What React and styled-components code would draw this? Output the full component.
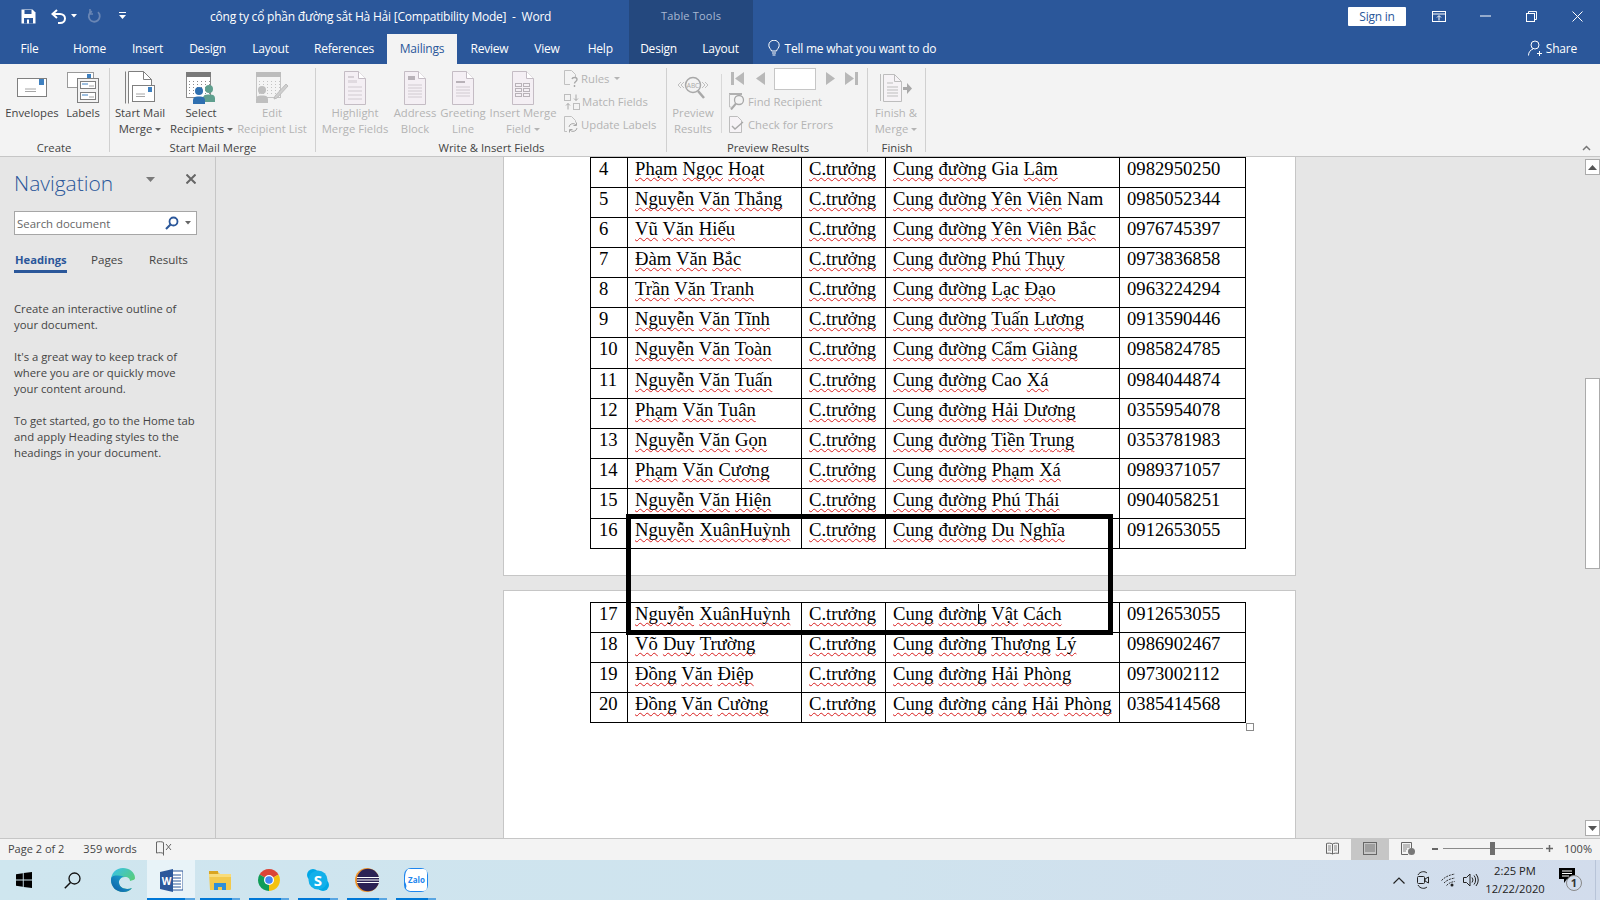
import React from 'react'
import styled, { createGlobalStyle } from 'styled-components'

const BLUE = '#2b579a'
const DIS = '#b4b4b4'

const Global = createGlobalStyle`
  html, body { margin: 0; padding: 0; overflow: hidden; background: #e6e6e6; }
  body { font-family: "Open Sans", "Liberation Sans", sans-serif; }
  svg { display: block; flex: none; }
`

const Shell = styled.div`
  width: 1600px;
  height: 900px;
  display: flex;
  flex-direction: column;
  overflow: hidden;
`
const Gap = styled.span`
  flex: none;
  width: ${p => p.$w}px;
`

/* ---------- title bar + tabs ---------- */
const Header = styled.header`
  height: 64px;
  background: ${BLUE};
  color: #fff;
  font-size: 12px;
  letter-spacing: -0.22px;
`
const TitleRow = styled.div`
  height: 32px;
  display: grid;
  grid-template-columns: 210px 419px 124px 1fr auto;
  align-items: center;
`
const Qat = styled.div`
  display: flex;
  align-items: center;
  padding-left: 21px;
`
const DocTitle = styled.div`
  white-space: pre;
`
const ContextHead = styled.div`
  height: 32px;
  line-height: 32px;
  text-align: center;
  background: #24487e;
  color: #a8b8d2;
  font-size: 11px;
  letter-spacing: 0.2px;
`
const WinControls = styled.div`
  display: flex;
  align-items: center;
`
const SignIn = styled.div`
  width: 58px;
  height: 19px;
  line-height: 19px;
  text-align: center;
  background: #fff;
  color: ${BLUE};
  border-radius: 1px;
  margin-right: 10px;
`
const WinBtn = styled.div`
  width: 46px;
  display: flex;
  justify-content: center;
`
const TabRow = styled.nav`
  height: 32px;
  display: flex;
`
const Tab = styled.div`
  width: ${p => p.$w}px;
  text-align: center;
  align-self: flex-end;
  height: ${p => (p.$active ? 30 : 32)}px;
  line-height: ${p => (p.$active ? 30 : 34)}px;
  background: ${p => (p.$active ? '#f3f3f3' : p.$context ? '#24487e' : 'transparent')};
  color: ${p => (p.$active ? BLUE : '#fff')};
`
const TellMe = styled.div`
  display: flex;
  align-items: center;
  gap: 5px;
  padding-left: 15px;
`
const Share = styled.div`
  margin-left: auto;
  display: flex;
  align-items: center;
  gap: 4px;
  padding-right: 23px;
`

/* ---------- ribbon ---------- */
const Ribbon = styled.section`
  height: 93px;
  box-sizing: border-box;
  background: #f3f3f3;
  border-bottom: 1px solid #c6c6c6;
  display: flex;
  font-size: 11.3px;
  color: #444;
`
const Group = styled.div`
  width: ${p => p.$w}px;
  box-sizing: border-box;
  display: flex;
  flex-direction: column;
  position: relative;
  padding-left: ${p => p.$pad || 0}px;
  &::after {
    content: '';
    position: absolute;
    right: 0;
    top: 4px;
    bottom: 4px;
    width: 1px;
    background: #d0d0d0;
  }
`
const GroupBody = styled.div`
  height: 76px;
  display: flex;
`
const GroupLabel = styled.div`
  height: 16px;
  line-height: 16px;
  text-align: center;
  color: #444;
  margin-left: ${p => (p.$off ? -p.$off : 0)}px;
`
const LargeBtn = styled.div`
  width: ${p => p.$w}px;
  flex: none;
  text-align: center;
  color: ${p => (p.$off ? DIS : '#444')};
  line-height: 16px;
  white-space: nowrap;
`
const LargeIcon = styled.div`
  height: 35px;
  padding-top: 6px;
  display: flex;
  justify-content: center;
  align-items: center;
`
const Caret = styled.span`
  display: inline-block;
  margin-left: 3px;
  vertical-align: 2px;
  border: 3px solid transparent;
  border-top: 3px solid ${p => (p.$off ? DIS : '#666')};
  border-bottom: 0;
`
const SmallCol = styled.div`
  padding: 3px 0 0 ${p => p.$pad || 4}px;
  color: ${DIS};
`
const SmallBtn = styled.div`
  height: 23px;
  display: flex;
  align-items: center;
  gap: 2px;
  white-space: nowrap;
`
const VSep = styled.div`
  width: 1px;
  height: 59px;
  margin: 10px 1px 0 3px;
  background: #d8d8d8;
`
const RecordNav = styled.div`
  display: flex;
  align-items: center;
  height: 23px;
  margin-left: 2px;
`
const RecordInput = styled.div`
  width: 40px;
  height: 20px;
  background: #fff;
  border: 1px solid #c6c6c6;
  margin: 0 10px 0 9px;
`
const CollapseBtn = styled.div`
  margin-left: auto;
  align-self: flex-end;
  padding: 0 9px 5px 0;
`

/* ---------- main area ---------- */
const Main = styled.main`
  height: 681px;
  display: grid;
  grid-template-columns: 216px 1fr 17px;
  background: #e6e6e6;
`
const NavPane = styled.aside`
  box-sizing: border-box;
  border-right: 1px solid #c6c6c6;
  padding: 12px 0 0 14px;
  color: #444;
  font-size: 11.3px;
`
const NavHead = styled.div`
  display: flex;
  align-items: center;
  height: 28px;
`
const NavTitle = styled.div`
  font-size: 21px;
  font-weight: 300;
  color: ${BLUE};
  width: 132px;
`
const NavArrow = styled.div`
  margin-top: -8px;
`
const NavClose = styled.div`
  margin: -8px 0 0 31px;
`
const SearchBox = styled.div`
  width: 183px;
  height: 24px;
  box-sizing: border-box;
  margin-top: 14px;
  background: #fff;
  border: 1px solid #a6a6a6;
  padding: 0 5px 0 2px;
  display: flex;
  align-items: center;
  font-size: 11.4px;
  color: #666;
`
const SearchIcons = styled.div`
  margin-left: auto;
  display: flex;
  align-items: center;
  gap: 6px;
`
const NavTabs = styled.div`
  margin-top: 15px;
  display: flex;
`
const NavTab = styled.div`
  width: ${p => p.$w}px;
  height: 23px;
  box-sizing: border-box;
  line-height: 20px;
  padding-left: ${p => p.$pad}px;
  font-weight: ${p => (p.$active ? 700 : 400)};
  color: ${p => (p.$active ? BLUE : '#444')};
  font-size: ${p => (p.$active ? '11.2px' : '11.6px')};
  border-bottom: 3px solid ${p => (p.$active ? BLUE : 'transparent')};
  margin-right: ${p => p.$gap}px;
`
const HelpText = styled.div`
  margin-top: 28px;
  line-height: 16px;
`
const HelpPara = styled.p`
  margin: 0 0 16px;
  white-space: nowrap;
`
const DocPane = styled.div`
  position: relative;
  overflow: hidden;
  padding-left: 287px;
`
const Page = styled.div`
  width: 793px;
  box-sizing: border-box;
  background: #fff;
  border: 1px solid #c6c6c6;
  padding-left: 86px;
  ${p => (p.$first
    ? 'height: 419px; border-top: 0;'
    : 'height: 300px; margin-top: 14px; padding-top: 11px; position: relative;')}
`
const WordTable = styled.table`
  table-layout: fixed;
  width: 655px;
  border-collapse: collapse;
  font-family: "Liberation Serif", "Times New Roman", serif;
  font-size: 18.67px;
  word-spacing: 0.4px;
  color: #000;
`
const Row = styled.tr`
  height: ${p => p.$h}px;
`
const Cell = styled.td`
  border: 1px solid #000;
  padding: 0 0 0 ${p => p.$pad || 7}px;
  vertical-align: top;
  white-space: nowrap;
  overflow: visible;
`
const Squiggle = styled.span`
  text-decoration: underline wavy #d81f1f 1px;
  text-decoration-skip-ink: none;
  text-underline-offset: 2px;
`
const MergeBox = styled.div`
  position: absolute;
  left: 410px;
  top: 357px;
  width: 487px;
  height: 121px;
  box-sizing: border-box;
  border: 5px solid #000;
  border-top-width: 4px;
`
const TextCaret = styled.div`
  position: absolute;
  left: 474px;
  top: 13px;
  width: 1px;
  height: 20px;
  background: #111;
`
const ResizeHandle = styled.div`
  position: absolute;
  left: 742px;
  top: 132px;
  width: 6px;
  height: 6px;
  background: #fff;
  border: 1px solid #8a8a8a;
`
const ScrollBar = styled.div`
  display: flex;
  flex-direction: column;
  padding: 2px 0 2px 2px;
`
const ScrollBtn = styled.div`
  width: 13px;
  height: 14px;
  background: #fff;
  border: 1px solid #ababab;
  display: flex;
  align-items: center;
  justify-content: center;
  margin-top: ${p => (p.$end ? 'auto' : 0)};
`
const ScrollThumb = styled.div`
  width: 13px;
  height: 189px;
  margin-top: 203px;
  background: #fff;
  border: 1px solid #ababab;
`

/* ---------- status bar ---------- */
const StatusBar = styled.footer`
  height: 22px;
  box-sizing: border-box;
  background: #f3f3f3;
  border-top: 1px solid #c6c6c6;
  display: flex;
  align-items: center;
  font-size: 11px;
  color: #444;
  padding-left: 8px;
`
const StatusText = styled.span`
  margin-right: 19px;
  padding-bottom: 3px;
`
const StatusGlyph = styled.div`
  padding-bottom: 2px;
`
const ViewBtn = styled.div`
  width: ${p => p.$w || 38}px;
  height: 21px;
  padding-bottom: 2px;
  box-sizing: border-box;
  display: flex;
  align-items: center;
  justify-content: center;
  background: ${p => (p.$active ? '#c6c6c6' : 'transparent')};
`
const StatusRight = styled.div`
  margin-left: auto;
  display: flex;
  align-items: center;
`
const ZoomSlider = styled.div`
  width: 100px;
  height: 1px;
  margin: 0 3px 2px 5px;
  background: #8a8a8a;
  position: relative;
`
const ZoomThumb = styled.div`
  position: absolute;
  left: 47px;
  top: -6px;
  width: 5px;
  height: 13px;
  background: #6e6e6e;
`
const ZoomPct = styled.span`
  margin: 0 8px 0 11px;
  padding-bottom: 3px;
`

/* ---------- taskbar ---------- */
const Taskbar = styled.div`
  height: 40px;
  display: flex;
  align-items: center;
  background: linear-gradient(90deg, #cfe6ef 0%, #cfe3ee 55%, #d2dcec 100%);
  color: #111;
`
const StartBtn = styled.div`
  width: 48px;
  height: 40px;
  display: flex;
  align-items: center;
  justify-content: center;
`
const AppBtn = styled.div`
  width: ${p => (p.$active ? 48 : 40)}px;
  margin-left: ${p => (p.$active ? 0 : p.$ml ?? 9)}px;
  height: 40px;
  box-sizing: border-box;
  display: flex;
  align-items: center;
  justify-content: center;
  position: relative;
  background: ${p => (p.$active ? '#e8f3f8' : 'transparent')};
  &::after {
    content: '';
    position: absolute;
    left: 0;
    right: 0;
    bottom: 0;
    height: 2px;
    background: linear-gradient(90deg, #0078d7 80%, #5aa6e2 80%);
  }
`
const PlainBtn = styled(AppBtn)`
  width: 48px;
  &::after { display: none; }
`
const Tray = styled.div`
  margin-left: auto;
  display: flex;
  align-items: center;
  height: 40px;
  font-size: 11.2px;
  color: #222;
`
const TrayIcon = styled.div`
  width: ${p => p.$w}px;
  display: flex;
  justify-content: center;
`
const Clock = styled.div`
  width: 70px;
  text-align: center;
  line-height: 18px;
  white-space: nowrap;
`
const Notify = styled.div`
  width: 36px;
  margin-left: 5px;
  display: flex;
  justify-content: center;
  border-right: 1px solid #b8c4d8;
  height: 40px;
  align-items: center;
  padding-right: 4px;
`

/* ---------- icons ---------- */
const S = ({ w, h, children, vb }) => (
  <svg width={w} height={h} viewBox={vb || `0 0 ${w} ${h}`} fill="none">{children}</svg>
)

const SaveIcon = () => (
  <S w={15} h={15}>
    <path d="M.5.5h11l3 3v11H.5z" fill="#fff" />
    <rect x="3.5" y="1" width="7" height="4" fill={BLUE} />
    <rect x="3" y="9" width="9" height="5.5" fill={BLUE} />
    <rect x="6" y="10.5" width="2" height="4" fill="#fff" />
  </S>
)
const UndoIcon = ({ color = '#fff' }) => (
  <S w={16} h={15}>
    <path d="M6 1 1.5 5 6 9M2 5h7c3 0 5 2 5 4.5S12 14 9 14H7" stroke={color} strokeWidth="2" />
  </S>
)
const RedoIcon = () => (
  <S w={14} h={15}>
    <path d="M11 3.2A5.5 5.5 0 1 1 5 2.2" stroke="#6a86b4" strokeWidth="1.8" />
    <path d="M3 0v5h3" stroke="#6a86b4" strokeWidth="1.6" />
  </S>
)
const TinyCaret = ({ color = '#fff' }) => (
  <S w={6} h={4}><path d="M0 0h6L3 3.5z" fill={color} /></S>
)
const QatMore = () => (
  <S w={7} h={8}><path d="M0 .5h7" stroke="#fff" /><path d="M0 3h7L3.5 7z" fill="#fff" /></S>
)
const RibbonDisplay = () => (
  <S w={14} h={11}>
    <rect x=".5" y=".5" width="13" height="10" stroke="#fff" />
    <path d="M.5 3h13M7 9.5V5M5 6.5l2-2 2 2" stroke="#fff" />
  </S>
)
const MinIcon = () => <S w={11} h={2}><path d="M0 1h11" stroke="#fff" /></S>
const RestoreIcon = () => (
  <S w={11} h={11}>
    <rect x=".5" y="2.5" width="8" height="8" stroke="#fff" />
    <path d="M2.5 2.5v-2h8v8h-2" stroke="#fff" />
  </S>
)
const CloseIcon = ({ size = 11, color = '#fff', sw = 1 }) => (
  <S w={size} h={size}>
    <path d={`M.5.5l${size - 1} ${size - 1}M${size - .5} .5l${-(size - 1)} ${size - 1}`} stroke={color} strokeWidth={sw} />
  </S>
)
const BulbIcon = () => (
  <S w={12} h={16}>
    <path d="M3.5 11C3 9 .8 8 .8 5.2a5.2 5 0 0 1 10.4 0C11.2 8 9 9 8.5 11z" stroke="#fff" />
    <path d="M4 13h4M4.5 15h3" stroke="#fff" />
  </S>
)
const ShareIcon = () => (
  <S w={14} h={16}>
    <circle cx="7" cy="5" r="4" stroke="#fff" />
    <path d="M.5 15.5c0-3.5 2-5.500 4.500-6.500M9 13.500h5M11.500 11v5" stroke="#fff" />
  </S>
)

const EnvelopeIcon = () => (
  <S w={30} h={19}>
    <rect x=".5" y=".5" width="29" height="18" fill="#fff" stroke="#7f7f7f" />
    <rect x="22" y="1" width="5" height="6" fill="#3e80c0" />
    <path d="M8 11h11M8 13.500h11" stroke="#a6a6a6" />
  </S>
)
const LabelsIcon = () => (
  <S w={32} h={31}>
    <rect x=".5" y=".5" width="26" height="15" fill="#fff" stroke="#9a9a9a" />
    <rect x="20" y="2" width="4" height="5" fill="#3e80c0" />
    <rect x="10.500" y="6.500" width="21" height="24" fill="#f3f3f3" stroke="#7f7f7f" />
    <rect x="13.500" y="9.500" width="15" height="7" fill="#fff" stroke="#7f7f7f" />
    <rect x="13.500" y="20.500" width="15" height="7" fill="#fff" stroke="#7f7f7f" />
    <path d="M15 12h6M15 23h6" stroke="#3e80c0" />
    <path d="M22 14h5M22 25h5" stroke="#a6a6a6" />
  </S>
)
const MergeIcon = () => (
  <S w={30} h={34}>
    <path d="M.5.5v32" stroke="#7f7f7f" />
    <path d="M3.500 32.500V.5h15l8 8v6" fill="#fff" stroke="#7f7f7f" />
    <path d="M18.500.5v8h8" stroke="#7f7f7f" />
    <rect x="7.500" y="14.500" width="22" height="16" fill="#fff" stroke="#7f7f7f" />
    <rect x="23" y="16" width="4" height="5" fill="#3e80c0" />
    <path d="M11 23h9M11 25.500h9" stroke="#a6a6a6" />
  </S>
)
const Dots = ({ color }) => (
  <g fill={color}>
    {[9, 12, 15, 18, 21].map(y => [3, 7, 11, 15, 19, 23].map(x => (
      <rect key={`${x}-${y}`} x={x} y={y} width="1" height="1" />
    )))}
  </g>
)
const Person = ({ x, y, color, s = 1 }) => (
  <g transform={`translate(${x} ${y}) scale(${s})`} fill={color}>
    <circle cx="6" cy="4" r="4" />
    <path d="M0 17v-4c0-3 3-4 6-3.500 3-.5 6 .5 6 3.500v4z" />
  </g>
)
const SelectIcon = () => (
  <S w={30} h={32}>
    <rect x=".5" y=".5" width="24" height="25" fill="#fff" stroke="#8a8a8a" />
    <rect x="0" y="0" width="25" height="5" fill="#7a7a7a" />
    <Dots color="#8a8a8a" />
    <Person x={17} y={13} color="#5f9f8e" />
    <Person x={7} y={15} color="#2e6fb0" s={1} />
  </S>
)
const EditRecipIcon = () => (
  <S w={33} h={32}>
    <rect x=".5" y=".5" width="24" height="25" fill="#f4f4f4" stroke="#c4c4c4" />
    <rect x="0" y="0" width="25" height="5" fill="#bcbcbc" />
    <Dots color="#c4c4c4" />
    <Person x={0} y={14} color="#bfbfbf" />
    <path d="M19 24l11-12 2 2-11 12-3 1z" fill="#cfcfcf" stroke="#bdbdbd" />
  </S>
)
const DocShape = ({ children }) => (
  <S w={22} h={34}>
    <path d="M.5.500h14l7 7v26H.500z" fill="#f4eff4" stroke="#c4bcc4" />
    <path d="M14.500.5v7h7" fill="#fff" stroke="#c4bcc4" />
    {children}
  </S>
)
const HighlightIcon = () => (
  <DocShape>
    <rect x="4" y="5" width="6" height="2" fill="#d6d0d6" />
    <rect x="4" y="9" width="9" height="3" fill="#e0dae0" />
    <path d="M4 16h14M4 20h14M4 24h14M4 28h14" stroke="#d0cad0" />
  </DocShape>
)
const AddressIcon = () => (
  <DocShape>
    <rect x="4" y="5" width="7" height="4" fill="#b8b2b8" />
    <path d="M4 14h14M4 17h14M4 20h14M4 23h14M4 26h14" stroke="#d0cad0" />
  </DocShape>
)
const GreetingIcon = () => (
  <DocShape>
    <rect x="4" y="10" width="9" height="2" fill="#b8b2b8" />
    <path d="M4 16h14M4 19h14M4 22h14M4 25h14" stroke="#d0cad0" />
  </DocShape>
)
const FieldIcon = () => (
  <DocShape>
    <rect x="3.500" y="12.500" width="6" height="3" stroke="#b8b2b8" />
    <rect x="11.500" y="12.500" width="6" height="3" stroke="#b8b2b8" />
    <rect x="3.500" y="17.500" width="6" height="3" stroke="#b8b2b8" />
    <rect x="11.500" y="17.500" width="6" height="3" stroke="#b8b2b8" />
    <rect x="3.500" y="22.500" width="6" height="3" stroke="#b8b2b8" />
    <rect x="11.500" y="22.500" width="6" height="3" stroke="#b8b2b8" />
  </DocShape>
)
const RulesIcon = () => (
  <S w={15} h={17}>
    <path d="M6 14.500H.5V.5h7l4 4V7" stroke="#c0c0c0" />
    <path d="M8 9c.5-2 5-2 5 .5 0 2-2.500 2-2.500 4M10.500 15v2" stroke="#a8a8a8" strokeWidth="1.400" />
  </S>
)
const MatchIcon = () => (
  <S w={16} h={16}>
    <rect x=".5" y=".5" width="6" height="6" stroke="#bdbdbd" />
    <rect x="9.500" y="9.500" width="6" height="6" stroke="#bdbdbd" />
    <path d="M12 .5v6M10 4.500l2 2 2-2M4 15.500v-6M2 11.500l2-2 2 2" stroke="#a8a8a8" />
  </S>
)
const UpdateIcon = () => (
  <S w={15} h={17}>
    <path d="M3 15.500H.5V.5h7l4 4v2" stroke="#c0c0c0" />
    <path d="M5 11a4 4 0 0 1 7-2M13 12a4 4 0 0 1-7 2M12.500 6.500V9.500H9.500M5.500 16.500V13.500h3" stroke="#a8a8a8" />
  </S>
)
const PreviewIcon = () => (
  <S w={32} h={25}>
    <path d="M4 7L1 10l3 3M7 7l-3 3 3 3M25 7l3 3-3 3M28 7l3 3-3 3" stroke="#c0c0c0" />
    <circle cx="16" cy="10" r="7.500" fill="#f3f3f3" stroke="#a8a8a8" strokeWidth="1.500" />
    <text x="16" y="12.500" textAnchor="middle" fontSize="6.500" fill="#a8a8a8" fontFamily="Open Sans">ABC</text>
    <path d="M21 16l6 7" stroke="#a8a8a8" strokeWidth="2.500" />
  </S>
)
const FirstIcon = () => <S w={13} h={13}><path d="M0 0h3v13H0zM13 0v13L4 6.500z" fill="#b8b8b8" /></S>
const PrevIcon = () => <S w={9} h={13}><path d="M9 0v13L0 6.500z" fill="#b8b8b8" /></S>
const NextIcon = () => <S w={9} h={13}><path d="M0 0v13l9-6.500z" fill="#b8b8b8" /></S>
const LastIcon = () => <S w={13} h={13}><path d="M13 0h-3v13h3zM0 0v13l9-6.500z" fill="#b8b8b8" /></S>
const FindIcon = () => (
  <S w={17} h={17}>
    <path d="M0 1h13" stroke="#b0b0b0" strokeWidth="2" />
    <path d="M.5 1v13h2" stroke="#c0c0c0" />
    <circle cx="10" cy="7" r="4.500" stroke="#a8a8a8" strokeWidth="1.300" />
    <path d="M7 10.500l-5 6" stroke="#a8a8a8" strokeWidth="2" />
  </S>
)
const CheckIcon = () => (
  <S w={15} h={17}>
    <path d="M.5.500h8l4 4v12H.500z" fill="#f6f3f6" stroke="#bdbdbd" />
    <path d="M3 10l3 3 8-7" stroke="#a8a8a8" strokeWidth="1.400" />
  </S>
)
const FinishIcon = () => (
  <S w={32} h={28}>
    <path d="M.5 0v27" stroke="#bdbdbd" />
    <path d="M3.500 27.500V.5h11l7 7v20z" fill="#f6f3f6" stroke="#bdbdbd" />
    <path d="M14.500.5v7h7M7 9h6M7 13h11M7 16h11M7 19h11M7 22h11" stroke="#bdbdbd" />
    <path d="M23 13h4V9l5 5.500-5 5.500v-4h-4z" fill="#a8a8a8" />
  </S>
)
const ChevronUp = ({ color = '#777' }) => (
  <S w={9} h={6}><path d="M1 5l3.500-3.500L8 5" stroke={color} strokeWidth="1.500" /></S>
)
const TrayChevron = () => (
  <S w={12} h={7}><path d="M.5 6.500L6 1l5.500 5.500" stroke="#222" strokeWidth="1.200" /></S>
)
const ArrowUp = () => <S w={9} h={5}><path d="M0 5h9L4.500 0z" fill="#555" /></S>
const ArrowDown = () => <S w={9} h={5}><path d="M0 0h9L4.500 5z" fill="#555" /></S>
const MenuArrow = () => <S w={9} h={5}><path d="M0 0h9L4.500 5z" fill="#7a7a7a" /></S>
const SearchGlass = () => (
  <S w={14} h={14}>
    <circle cx="8.500" cy="5.500" r="4" stroke={BLUE} strokeWidth="1.800" />
    <path d="M5.500 8.500L1 13" stroke={BLUE} strokeWidth="2.200" />
  </S>
)
const ProofIcon = () => (
  <S w={16} h={15}>
    <path d="M7.500 1.500C6 .5 3 .5.500 1v11c2.500-.5 5.500-.5 7 .5M7.500 1.500v13" stroke="#666" />
    <path d="M10 3l5 6M15 3l-5 6" stroke="#666" />
  </S>
)
const ReadIcon = () => (
  <S w={13} h={13}>
    <path d="M6.500 2C5 1 2 1 .5 1.500v10c1.500-.5 4.500-.5 6 .5 1.500-1 4.500-1 6-.5v-10C11 1 8 1 6.500 2zM6.500 2v10" stroke="#666" />
    <path d="M2 4h3M2 6h3M2 8h3M8 4h3M8 6h3M8 8h3" stroke="#888" />
  </S>
)
const PrintIcon = () => (
  <S w={14} h={13}>
    <rect x=".5" y=".5" width="13" height="12" stroke="#666" />
    <path d="M2 3h10M2 5h10M2 7h10M2 9h10" stroke="#777" />
  </S>
)
const WebIcon = () => (
  <S w={14} h={13}>
    <path d="M7 12.500H.5V.5h10v6" stroke="#666" />
    <path d="M2 3h7M2 5h7M2 7h4M2 9h3" stroke="#888" />
    <circle cx="10.500" cy="9.500" r="3.500" fill="#777" />
  </S>
)
const Minus = () => <StatusGlyph><S w={6} h={2}><rect width="6" height="2" fill="#666" /></S></StatusGlyph>
const Plus = () => <StatusGlyph><S w={7} h={7}><path d="M0 3.500h7M3.500 0v7" stroke="#666" strokeWidth="1.500" /></S></StatusGlyph>

const WindowsLogo = () => (
  <S w={16} h={16}>
    <path d="M0 2.200L6.800 1.200V7.500H0zM7.700 1.100L16 0v7.500H7.700zM0 8.500h6.800v6.300L0 13.800zM7.700 8.500H16V16l-8.300-1.100z" fill="#000" />
  </S>
)
const SearchTask = () => (
  <S w={17} h={17}>
    <circle cx="10.500" cy="6.500" r="5.500" stroke="#111" strokeWidth="1.300" />
    <path d="M6.500 10.500L.8 16.200" stroke="#111" strokeWidth="1.500" />
  </S>
)
const EdgeLogo = () => (
  <S w={24} h={24}>
    <defs>
      <linearGradient id="edgeA" x1="0" y1="1" x2="1" y2="0">
        <stop offset="0" stopColor="#0c59a4" /><stop offset="1" stopColor="#1fb2d8" />
      </linearGradient>
      <linearGradient id="edgeB" x1="0" y1="0" x2="1" y2="1">
        <stop offset="0" stopColor="#35c1f1" /><stop offset="1" stopColor="#66d14b" />
      </linearGradient>
    </defs>
    <path d="M12 0C5 0 0 5.500 0 12c0 7 5.500 12 12 12 4 0 7-1.500 9-4-5 2-12 1-13-5-.5-3 2-6 6-6 3.500 0 5 2 5 4 2-.5 5-1 5-3 0-6-6-10-12-10z" fill="url(#edgeB)" />
    <path d="M0 12c0 7 5.500 12 12 12 4 0 7-1.500 9-4-5 2-12 1-13-5-.5-3 2-6 5-6.500C7 7.500 0 6 0 12z" fill="url(#edgeA)" />
  </S>
)
const WordLogo = () => (
  <S w={23} h={23}>
    <rect x="9" y="2" width="14" height="19" fill="#fff" stroke="#2b579a" />
    <path d="M12 6h9M12 9h9M12 12h9M12 15h9M12 18h9" stroke="#2b579a" />
    <path d="M0 3l13-3v23L0 20z" fill="#2b579a" />
    <text x="6.500" y="15.500" textAnchor="middle" fontSize="10" fontWeight="700" fill="#fff" fontFamily="Open Sans">W</text>
  </S>
)
const FolderLogo = () => (
  <S w={22} h={19}>
    <path d="M0 2a1 1 0 0 1 1-1h8l2 2h10a1 1 0 0 1 1 1v14a1 1 0 0 1-1 1H1z" fill="#f2c94c" />
    <rect x="0" y="0" width="9" height="3" fill="#d9a520" />
    <rect x="0" y="3" width="22" height="3" fill="#f8dc7a" />
    <path d="M5 19v-7h12v7h-4v-3H9v3z" fill="#2f8fd8" />
  </S>
)
const ChromeLogo = () => (
  <S w={22} h={22}>
    <path d="M11 11L1.500 5.500A11 11 0 0 1 20.500 5.500z" fill="#db4437" />
    <path d="M11 11l9.500-5.500A11 11 0 0 1 11 22z" fill="#f4c20d" />
    <path d="M11 11v11A11 11 0 0 1 1.500 5.500z" fill="#0f9d58" />
    <circle cx="11" cy="11" r="5" fill="#fff" />
    <circle cx="11" cy="11" r="3.800" fill="#4285f4" />
  </S>
)
const SkypeLogo = () => (
  <S w={22} h={22}>
    <circle cx="6" cy="6" r="6" fill="#00a7e6" />
    <circle cx="16" cy="16" r="6" fill="#00a7e6" />
    <circle cx="11" cy="11" r="9.500" fill="#12b0ea" />
    <text x="11" y="16.500" textAnchor="middle" fontSize="15" fontWeight="700" fill="#fff" fontFamily="Open Sans">S</text>
  </S>
)
const EclipseLogo = () => (
  <S w={24} h={24}>
    <circle cx="12" cy="12" r="12" fill="#f0962e" />
    <circle cx="13" cy="12" r="11.200" fill="#2c2255" />
    <path d="M2 9.500h22M2 12h22M2 14.500h22" stroke="#fff" strokeWidth="1.100" />
  </S>
)
const ZaloLogo = () => (
  <S w={24} h={24}>
    <rect x="0" y="0" width="24" height="24" rx="7" fill="#1f86ee" />
    <path d="M4 1h15a4 4 0 0 1 4 4v14a4 4 0 0 1-4 4H7c-2 0-5-1-5-3 1-2 0-4-1-6C1 8 1 4 4 1z" fill="#fff" />
    <text x="12.500" y="14.500" textAnchor="middle" fontSize="8" fontWeight="700" fill="#1f86ee" fontFamily="Open Sans">Zalo</text>
  </S>
)
const MeetIcon = () => (
  <S w={12} h={18}>
    <path d="M1 4c2-4 7-4 9-2M1 14c2 4 7 4 9 2" stroke="#222" />
    <rect x=".5" y="5.500" width="7" height="7" rx="1" stroke="#222" />
    <path d="M8 8l3.500-2v6L8 10z" stroke="#222" />
  </S>
)
const WifiIcon = () => (
  <S w={15} h={14}>
    <path d="M.5 7.500C4 4 8 2 14 1M3 10c2.500-2.500 5-4 11-5M5.500 12.500C8 10 10 9 14 8.500" stroke="#333" strokeDasharray="2 1" />
    <circle cx="11" cy="12" r="1.500" fill="#222" />
  </S>
)
const VolumeIcon = () => (
  <S w={16} h={14}>
    <path d="M.5 4.500h3L7 1v12L3.500 9.500h-3z" stroke="#222" />
    <path d="M9 4.500a4 4 0 0 1 0 5M11 2.500a7 7 0 0 1 0 9M13 1a10 10 0 0 1 0 12" stroke="#222" />
  </S>
)
const BellNote = () => (
  <S w={28} h={25}>
    <path d="M0 0h16v11h-8l-3 4v-4H0z" fill="#000" />
    <path d="M3 3h10M3 5.500h10M3 8h7" stroke="#fff" />
    <circle cx="15" cy="15" r="7.500" fill="#d2dcec" stroke="#888" strokeWidth="1" />
    <text x="15" y="19" textAnchor="middle" fontSize="11" fontWeight="700" fill="#333" fontFamily="Open Sans">1</text>
  </S>
)

/* ---------- table data ---------- */
// words listed in `plain` were not flagged by the spell checker
const plain = ['Gia', 'Nam', 'Cao']

const rows1 = [
  ['4', 'Phạm Ngọc Hoạt', 'Cung đường Gia Lâm', '0982950250'],
  ['5', 'Nguyễn Văn Thắng', 'Cung đường Yên Viên Nam', '0985052344'],
  ['6', 'Vũ Văn Hiếu', 'Cung đường Yên Viên Bắc', '0976745397'],
  ['7', 'Đàm Văn Bắc', 'Cung đường Phú Thụy', '0973836858'],
  ['8', 'Trần Văn Tranh', 'Cung đường Lạc Đạo', '0963224294'],
  ['9', 'Nguyễn Văn Tĩnh', 'Cung đường Tuấn Lương', '0913590446'],
  ['10', 'Nguyễn Văn Toàn', 'Cung đường Cẩm Giàng', '0985824785'],
  ['11', 'Nguyễn Văn Tuấn', 'Cung đường Cao Xá', '0984044874'],
  ['12', 'Phạm Văn Tuân', 'Cung đường Hải Dương', '0355954078'],
  ['13', 'Nguyễn Văn Gọn', 'Cung đường Tiền Trung', '0353781983'],
  ['14', 'Phạm Văn Cương', 'Cung đường Phạm Xá', '0989371057'],
  ['15', 'Nguyễn Văn Hiện', 'Cung đường Phú Thái', '0904058251'],
  ['16', 'Nguyễn XuânHuỳnh', 'Cung đường Du Nghĩa', '0912653055'],
]
const rows2 = [
  ['17', 'Nguyễn XuânHuỳnh', 'Cung đường Vật Cách', '0912653055'],
  ['18', 'Võ Duy Trường', 'Cung đường Thượng Lý', '0986902467'],
  ['19', 'Đồng Văn Điệp', 'Cung đường Hải Phòng', '0973002112'],
  ['20', 'Đồng Văn Cường', 'Cung đường cảng Hải Phòng', '0385414568'],
]

function Flagged({ text }) {
  return text.split(' ').map((word, i) => (
    <React.Fragment key={i}>
      {i > 0 && ' '}
      {plain.includes(word) ? word : <Squiggle>{word}</Squiggle>}
    </React.Fragment>
  ))
}

function StaffTable({ rows, height }) {
  return (
    <WordTable>
      <colgroup>
        <col width="37" /><col width="174" /><col width="84" /><col width="234" /><col width="126" />
      </colgroup>
      <tbody>
        {rows.map(r => (
          <Row key={r[0]} $h={height}>
            <Cell $pad={8}>{r[0]}</Cell>
            <Cell><Flagged text={r[1]} /></Cell>
            <Cell><Flagged text="C.trưởng" /></Cell>
            <Cell><Flagged text={r[2]} /></Cell>
            <Cell>{r[3]}</Cell>
          </Row>
        ))}
      </tbody>
    </WordTable>
  )
}

const tabs = [
  ['File', 59], ['Home', 61], ['Insert', 55], ['Design', 65], ['Layout', 61], ['References', 86],
]
const tabsAfter = [['Review', 65], ['View', 50], ['Help', 56.5]]

function Big({ w, icon, off, lines, caret }) {
  return (
    <LargeBtn $w={w} $off={off}>
      <LargeIcon>{icon}</LargeIcon>
      {lines.map((l, i) => (
        <div key={i}>{l}{caret && i === lines.length - 1 && <Caret $off={off} />}</div>
      ))}
    </LargeBtn>
  )
}

export default function App() {
  return (
    <Shell>
      <Global />
      <Header>
        <TitleRow>
          <Qat>
            <SaveIcon />
            <Gap $w={15} />
            <UndoIcon />
            <Gap $w={4} />
            <TinyCaret />
            <Gap $w={10} />
            <RedoIcon />
            <Gap $w={18} />
            <QatMore />
          </Qat>
          <DocTitle>{'công ty cổ phần đường sắt Hà Hải [Compatibility Mode]  -  Word'}</DocTitle>
          <ContextHead>Table Tools</ContextHead>
          <div />
          <WinControls>
            <SignIn>Sign in</SignIn>
            <WinBtn><RibbonDisplay /></WinBtn>
            <WinBtn><MinIcon /></WinBtn>
            <WinBtn><RestoreIcon /></WinBtn>
            <WinBtn><CloseIcon /></WinBtn>
          </WinControls>
        </TitleRow>
        <TabRow>
          {tabs.map(([t, w]) => <Tab key={t} $w={w}>{t}</Tab>)}
          <Tab $w={70} $active>Mailings</Tab>
          {tabsAfter.map(([t, w]) => <Tab key={t} $w={w}>{t}</Tab>)}
          <Tab $w={60} $context>Design</Tab>
          <Tab $w={64} $context>Layout</Tab>
          <TellMe><BulbIcon />Tell me what you want to do</TellMe>
          <Share><ShareIcon />Share</Share>
        </TabRow>
      </Header>

      <Ribbon>
        <Group $w={110} $pad={3}>
          <GroupBody>
            <Big w={58} icon={<EnvelopeIcon />} lines={['Envelopes']} />
            <Big w={44} icon={<LabelsIcon />} lines={['Labels']} />
          </GroupBody>
          <GroupLabel $off={5}>Create</GroupLabel>
        </Group>
        <Group $w={206}>
          <GroupBody>
            <Big w={60} icon={<MergeIcon />} lines={['Start Mail', 'Merge']} caret />
            <Big w={62} icon={<SelectIcon />} lines={['Select', 'Recipients']} caret />
            <Big w={80} off icon={<EditRecipIcon />} lines={['Edit', 'Recipient List']} />
          </GroupBody>
          <GroupLabel>Start Mail Merge</GroupLabel>
        </Group>
        <Group $w={351} $pad={4}>
          <GroupBody>
            <Big w={70} off icon={<HighlightIcon />} lines={['Highlight', 'Merge Fields']} />
            <Big w={50} off icon={<AddressIcon />} lines={['Address', 'Block']} />
            <Big w={46} off icon={<GreetingIcon />} lines={['Greeting', 'Line']} />
            <Big w={74} off icon={<FieldIcon />} lines={['Insert Merge', 'Field']} caret />
            <SmallCol>
              <SmallBtn><RulesIcon />Rules<Caret $off /></SmallBtn>
              <SmallBtn><MatchIcon />Match Fields</SmallBtn>
              <SmallBtn><UpdateIcon />Update Labels</SmallBtn>
            </SmallCol>
          </GroupBody>
          <GroupLabel $off={4}>Write &amp; Insert Fields</GroupLabel>
        </Group>
        <Group $w={201} $pad={1}>
          <GroupBody>
            <Big w={50} off icon={<PreviewIcon />} lines={['Preview', 'Results']} />
            <VSep />
            <SmallCol $pad={6}>
              <RecordNav>
                <FirstIcon />
                <Gap $w={12} />
                <PrevIcon />
                <RecordInput />
                <NextIcon />
                <Gap $w={10} />
                <LastIcon />
              </RecordNav>
              <SmallBtn><FindIcon />Find Recipient</SmallBtn>
              <SmallBtn><CheckIcon /><Gap $w={0} />Check for Errors</SmallBtn>
            </SmallCol>
          </GroupBody>
          <GroupLabel>Preview Results</GroupLabel>
        </Group>
        <Group $w={58}>
          <GroupBody>
            <Big w={56} off icon={<FinishIcon />} lines={['Finish &', 'Merge']} caret />
          </GroupBody>
          <GroupLabel>Finish</GroupLabel>
        </Group>
        <CollapseBtn><ChevronUp /></CollapseBtn>
      </Ribbon>

      <Main>
        <NavPane>
          <NavHead>
            <NavTitle>Navigation</NavTitle>
            <NavArrow><MenuArrow /></NavArrow>
            <NavClose><CloseIcon size={10} color="#666" sw={2} /></NavClose>
          </NavHead>
          <SearchBox>
            Search document
            <SearchIcons><SearchGlass /><TinyCaret color="#666" /></SearchIcons>
          </SearchBox>
          <NavTabs>
            <NavTab $active $w={53} $pad={1} $gap={24}>Headings</NavTab>
            <NavTab $w={40} $pad={0} $gap={18}>Pages</NavTab>
            <NavTab $w={50} $pad={0} $gap={0}>Results</NavTab>
          </NavTabs>
          <HelpText>
            <HelpPara>Create an interactive outline of<br />your document.</HelpPara>
            <HelpPara>It's a great way to keep track of<br />where you are or quickly move<br />your content around.</HelpPara>
            <HelpPara>To get started, go to the Home tab<br />and apply Heading styles to the<br />headings in your document.</HelpPara>
          </HelpText>
        </NavPane>

        <DocPane>
          <Page $first>
            <StaffTable rows={rows1} height={30.08} />
          </Page>
          <Page>
            <StaffTable rows={rows2} height={30} />
            <TextCaret />
            <ResizeHandle />
          </Page>
          <MergeBox />
        </DocPane>

        <ScrollBar>
          <ScrollBtn><ArrowUp /></ScrollBtn>
          <ScrollThumb />
          <ScrollBtn $end><ArrowDown /></ScrollBtn>
        </ScrollBar>
      </Main>

      <StatusBar>
        <StatusText>Page 2 of 2</StatusText>
        <StatusText>359 words</StatusText>
        <StatusGlyph><ProofIcon /></StatusGlyph>
        <StatusRight>
          <ViewBtn><ReadIcon /></ViewBtn>
          <ViewBtn $active><PrintIcon /></ViewBtn>
          <ViewBtn><WebIcon /></ViewBtn>
          <Gap $w={5} />
          <Minus />
          <ZoomSlider><ZoomThumb /></ZoomSlider>
          <Plus />
          <ZoomPct>100%</ZoomPct>
        </StatusRight>
      </StatusBar>

      <Taskbar>
        <StartBtn><WindowsLogo /></StartBtn>
        <PlainBtn $ml={0}><SearchTask /></PlainBtn>
        <PlainBtn $ml={3}><EdgeLogo /></PlainBtn>
        <AppBtn $active><WordLogo /></AppBtn>
        <AppBtn $ml={5}><FolderLogo /></AppBtn>
        <AppBtn><ChromeLogo /></AppBtn>
        <AppBtn><SkypeLogo /></AppBtn>
        <AppBtn><EclipseLogo /></AppBtn>
        <AppBtn><ZaloLogo /></AppBtn>
        <Tray>
          <TrayIcon $w={24}><TrayChevron /></TrayIcon>
          <TrayIcon $w={24}><MeetIcon /></TrayIcon>
          <TrayIcon $w={27}><WifiIcon /></TrayIcon>
          <TrayIcon $w={18}><VolumeIcon /></TrayIcon>
          <Clock>2:25 PM<br />12/22/2020</Clock>
          <Notify><BellNote /></Notify>
          <Gap $w={4} />
        </Tray>
      </Taskbar>
    </Shell>
  )
}
